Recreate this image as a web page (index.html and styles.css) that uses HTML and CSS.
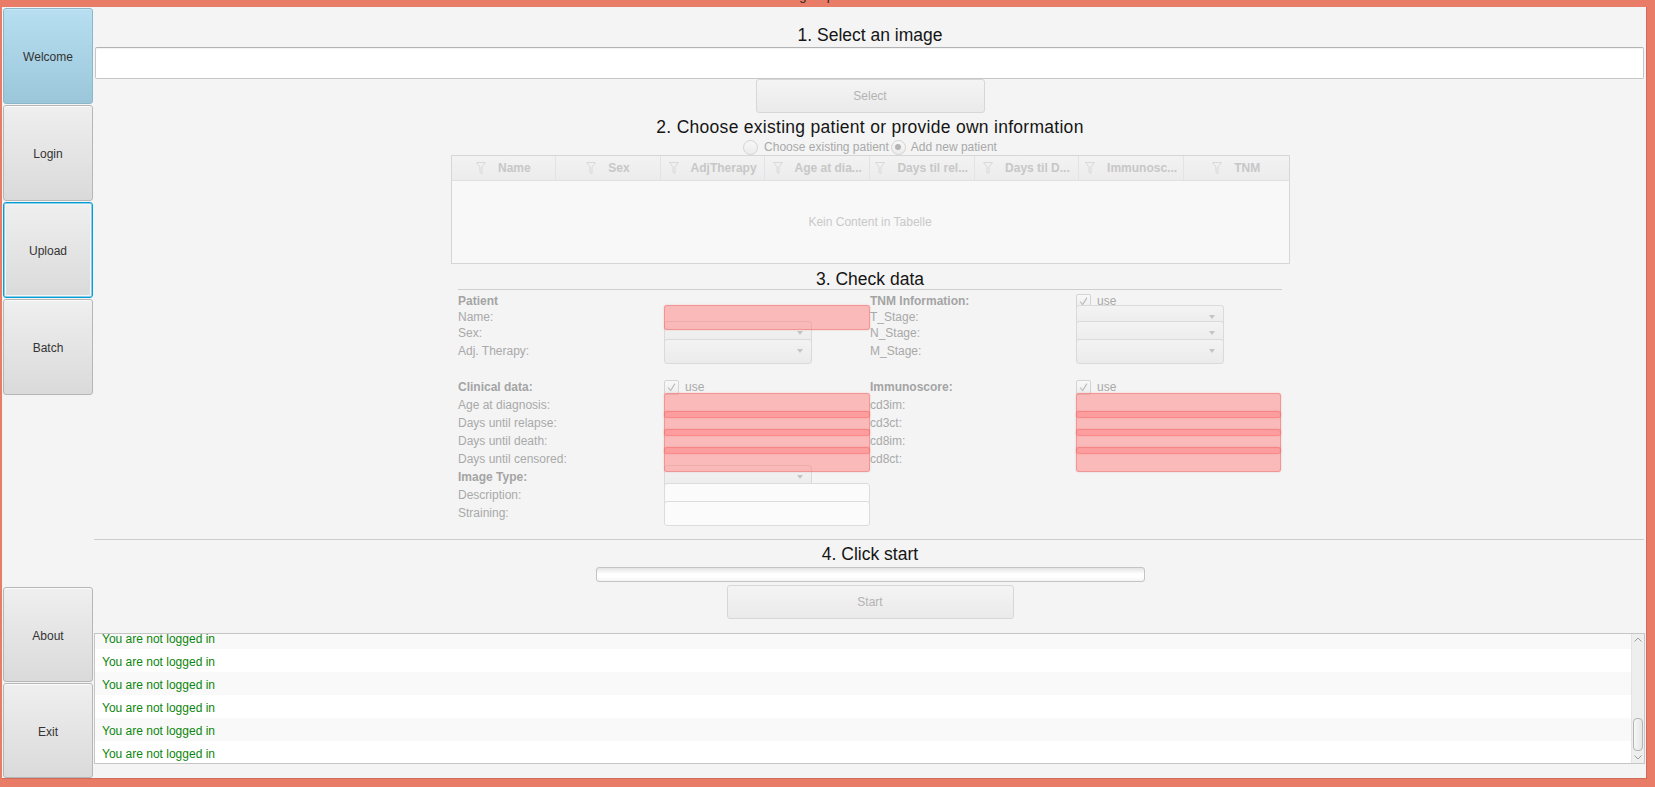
FILE: index.html
```html
<!DOCTYPE html>
<html>
<head>
<meta charset="utf-8">
<title>Image Upload</title>
<link rel="stylesheet" href="styles.css">
</head>
<body>
<div class="titlebar"><span class="title-text">Image Upload</span></div>
<div class="window">
  <nav class="sidebar">
    <button class="nav-btn active">Welcome</button>
    <button class="nav-btn">Login</button>
    <button class="nav-btn focused">Upload</button>
    <button class="nav-btn">Batch</button>
    <div class="sidebar-spacer"></div>
    <button class="nav-btn bottom">About</button>
    <button class="nav-btn bottom">Exit</button>
  </nav>
  <main class="main">
    <div class="heading h1">1. Select an image</div>
    <div class="path-field"></div>
    <button class="btn select-btn" disabled>Select</button>

    <div class="heading h2">2. Choose existing patient or provide own information</div>
    <div class="radios">
      <span class="radio"></span><span class="radio-label">Choose existing patient</span>
      <span class="radio checked"><span class="dot"></span></span><span class="radio-label second">Add new patient</span>
    </div>
    <div class="table">
      <div class="thead">
        <div class="th"><svg class="funnel" viewBox="0 0 10 12"><path d="M0.5 0.5H9.5L6 5V11.5L4 10.5V5Z"/></svg><span>Name</span></div>
        <div class="th"><svg class="funnel" viewBox="0 0 10 12"><path d="M0.5 0.5H9.5L6 5V11.5L4 10.5V5Z"/></svg><span>Sex</span></div>
        <div class="th"><svg class="funnel" viewBox="0 0 10 12"><path d="M0.5 0.5H9.5L6 5V11.5L4 10.5V5Z"/></svg><span>AdjTherapy</span></div>
        <div class="th"><svg class="funnel" viewBox="0 0 10 12"><path d="M0.5 0.5H9.5L6 5V11.5L4 10.5V5Z"/></svg><span>Age at dia...</span></div>
        <div class="th"><svg class="funnel" viewBox="0 0 10 12"><path d="M0.5 0.5H9.5L6 5V11.5L4 10.5V5Z"/></svg><span>Days til rel...</span></div>
        <div class="th"><svg class="funnel" viewBox="0 0 10 12"><path d="M0.5 0.5H9.5L6 5V11.5L4 10.5V5Z"/></svg><span>Days til D...</span></div>
        <div class="th"><svg class="funnel" viewBox="0 0 10 12"><path d="M0.5 0.5H9.5L6 5V11.5L4 10.5V5Z"/></svg><span>Immunosc...</span></div>
        <div class="th"><svg class="funnel" viewBox="0 0 10 12"><path d="M0.5 0.5H9.5L6 5V11.5L4 10.5V5Z"/></svg><span>TNM</span></div>
      </div>
      <div class="tbody"><span class="placeholder">Kein Content in Tabelle</span></div>
    </div>

    <div class="heading h3">3. Check data</div>
    <div class="form-sep"></div>
    <div class="form">
      <div class="lbl bold">Patient</div>
      <div></div>
      <div class="lbl bold">TNM Information:</div>
      <div class="use"><span class="check"><svg viewBox="0 0 15 15"><path d="M3.5 7.5L6.5 11L11.5 3"/></svg></span><span>use</span></div>

      <div class="lbl">Name:</div>
      <div class="err"></div>
      <div class="lbl">T_Stage:</div>
      <div class="combo"><span class="arrow"></span></div>

      <div class="lbl">Sex:</div>
      <div class="combo"><span class="arrow"></span></div>
      <div class="lbl">N_Stage:</div>
      <div class="combo"><span class="arrow"></span></div>

      <div class="lbl">Adj. Therapy:</div>
      <div class="combo"><span class="arrow"></span></div>
      <div class="lbl">M_Stage:</div>
      <div class="combo"><span class="arrow"></span></div>

      <div class="row-gap"></div>

      <div class="lbl bold">Clinical data:</div>
      <div class="use"><span class="check"><svg viewBox="0 0 15 15"><path d="M3.5 7.5L6.5 11L11.5 3"/></svg></span><span>use</span></div>
      <div class="lbl bold">Immunoscore:</div>
      <div class="use"><span class="check"><svg viewBox="0 0 15 15"><path d="M3.5 7.5L6.5 11L11.5 3"/></svg></span><span>use</span></div>

      <div class="lbl">Age at diagnosis:</div>
      <div class="err"></div>
      <div class="lbl">cd3im:</div>
      <div class="err narrow"></div>

      <div class="lbl">Days until relapse:</div>
      <div class="err"></div>
      <div class="lbl">cd3ct:</div>
      <div class="err narrow"></div>

      <div class="lbl">Days until death:</div>
      <div class="err"></div>
      <div class="lbl">cd8im:</div>
      <div class="err narrow"></div>

      <div class="lbl">Days until censored:</div>
      <div class="err"></div>
      <div class="lbl">cd8ct:</div>
      <div class="err narrow"></div>

      <div class="lbl bold">Image Type:</div>
      <div class="combo"><span class="arrow"></span></div>
      <div></div>
      <div></div>

      <div class="lbl">Description:</div>
      <div class="field"></div>
      <div></div>
      <div></div>

      <div class="lbl">Straining:</div>
      <div class="field"></div>
      <div></div>
      <div></div>
    </div>

    <div class="main-sep"></div>
    <div class="heading h4">4. Click start</div>
    <div class="progress"></div>
    <button class="btn start-btn" disabled>Start</button>

    <div class="log">
      <div class="log-rows">
        <div class="log-row">You are not logged in</div>
        <div class="log-row">You are not logged in</div>
        <div class="log-row">You are not logged in</div>
        <div class="log-row">You are not logged in</div>
        <div class="log-row">You are not logged in</div>
        <div class="log-row">You are not logged in</div>
      </div>
      <div class="scrollbar">
        <div class="sb-arrow"><svg viewBox="0 0 8 5"><path d="M0.5 4.5L4 1L7.5 4.5"/></svg></div>
        <div class="sb-track"><div class="sb-thumb"></div></div>
        <div class="sb-arrow"><svg viewBox="0 0 8 5"><path d="M0.5 0.5L4 4L7.5 0.5"/></svg></div>
      </div>
    </div>
  </main>
</div>
</body>
</html>
```
FILE: styles.css
```css
* { box-sizing: border-box; }

html, body {
  margin: 0;
  padding: 0;
}

body {
  width: 1655px;
  height: 787px;
  overflow: hidden;
  background: #e87c67;
  font-family: "Liberation Sans", Arial, sans-serif;
  font-size: 12px;
  color: #333;
}

.titlebar {
  height: 7px;
  overflow: hidden;
  text-align: center;
  padding-right: 19px;
}

.title-text {
  display: block;
  font-size: 13px;
  line-height: 13px;
  margin-top: -11px;
  color: #222;
}

.window {
  margin-left: 2px;
  width: 1645px;
  height: 771px;
  background: #f4f4f4;
  border-right: 1px solid #cf6c59;
  box-shadow: 0 1px 0 #cf6c59;
  display: flex;
}

/* ---------- sidebar ---------- */
.sidebar {
  width: 92px;
  flex: none;
  display: flex;
  flex-direction: column;
}

.sidebar-spacer { flex: 1; }

.nav-btn {
  width: 90px;
  height: 96px;
  flex: none;
  margin: 1px 0 0 1px;
  padding: 2px 0 0 0;
  border: 1px solid #b6b6b6;
  border-radius: 3px;
  background: linear-gradient(#efefef, #dadada);
  box-shadow: inset 0 1px 0 #fbfbfb;
  font-family: "Liberation Sans", Arial, sans-serif;
  font-size: 12px;
  color: #333;
}

.nav-btn.bottom { height: 95px; }

.nav-btn.active {
  background: linear-gradient(#b7dff1, #9bc6da);
  border-color: #8cb6ca;
  box-shadow: inset 0 1px 0 #c7e8f6;
}

.nav-btn.focused {
  border-color: #049ed4;
  box-shadow: inset 0 0 0 1px rgba(4, 158, 212, 0.45), inset 0 0 0 2px #f6f6f6;
}

/* ---------- main ---------- */
.main {
  flex: 1;
  display: flex;
  flex-direction: column;
  align-items: center;
}

.heading {
  font-size: 17.5px;
  line-height: 20px;
  height: 20px;
  color: #151515;
  white-space: nowrap;
}

.h1 { margin-top: 18px; }
.h2 { margin-top: 4px; letter-spacing: 0.28px; }
.h3 { margin-top: 5px; }
.h4 { margin-top: 4px; }

.path-field {
  align-self: stretch;
  margin: 2px 2px 0 1px;
  height: 32px;
  background: #fff;
  border: 1px solid #c6c6c6;
  border-top-color: #b3b3b3;
  border-radius: 2px;
  box-shadow: inset 0 1px 1px rgba(0, 0, 0, 0.05);
}

.btn {
  padding: 0;
  border: 1px solid #d7d7d7;
  border-radius: 3px;
  background: linear-gradient(#f4f4f4, #eaeaea);
  font-family: "Liberation Sans", Arial, sans-serif;
  font-size: 12px;
  color: #b3b3b3;
}

.select-btn {
  width: 229px;
  height: 34px;
}

.start-btn {
  width: 287px;
  height: 34px;
  margin-top: 3px;
}

/* radios */
.radios {
  margin-top: 2px;
  height: 16px;
  display: flex;
  align-items: center;
  color: #a9a9a9;
}

.radio {
  width: 15px;
  height: 15px;
  border-radius: 50%;
  border: 1px solid #d3d3d3;
  background: linear-gradient(#f7f7f7, #ececec);
  display: flex;
  align-items: center;
  justify-content: center;
}

.radio .dot {
  width: 6px;
  height: 6px;
  border-radius: 50%;
  background: #b4b4b4;
}

.radio-label { margin-left: 6px; margin-right: 2px; }
.radio-label.second { margin-left: 5px; margin-right: 0; }

/* table */
.table {
  width: 839px;
  height: 109px;
  border: 1px solid #d6d6d6;
  background: #f8f8f8;
  display: flex;
  flex-direction: column;
}

.thead {
  height: 25px;
  flex: none;
  display: grid;
  grid-template-columns: repeat(8, 1fr);
  background: linear-gradient(#f2f2f2, #ececec);
  border-bottom: 1px solid #e1e1e1;
}

.th {
  display: flex;
  align-items: center;
  justify-content: center;
  gap: 12px;
  border-right: 1px solid #e3e3e3;
  font-weight: bold;
  color: #c7c7c7;
  white-space: nowrap;
  overflow: hidden;
}

.th:last-child { border-right: none; }

.funnel {
  width: 10px;
  height: 12px;
  flex: none;
}

.funnel path {
  fill: none;
  stroke: #d9d9d9;
  stroke-width: 1;
}

.tbody {
  flex: 1;
  display: flex;
  align-items: center;
  justify-content: center;
}

.placeholder { color: #c9c9c9; }

/* form */
.form-sep {
  width: 824px;
  height: 1px;
  background: #cfcfcf;
}

.form {
  margin-top: 3px;
  width: 824px;
  display: grid;
  grid-template-columns: repeat(4, 206px);
  grid-template-rows: 16px 16px 16px 20px 17px repeat(8, 18px);
}

.form > * { align-self: center; }

.row-gap { grid-column: 1 / -1; }

.lbl {
  line-height: 14px;
  color: #a9a9a9;
  white-space: nowrap;
}

.lbl.bold {
  font-weight: bold;
  color: #a4a4a4;
}

.use {
  display: flex;
  align-items: center;
  gap: 6px;
  color: #a9a9a9;
  line-height: 15px;
}

.check {
  width: 15px;
  height: 15px;
  flex: none;
  border: 1px solid #d4d4d4;
  border-radius: 2px;
  background: linear-gradient(#f8f8f8, #ededed);
  display: flex;
}

.check svg { width: 13px; height: 13px; }

.check path {
  fill: none;
  stroke: #b9b9b9;
  stroke-width: 1.2;
}

.combo {
  width: 148px;
  height: 25px;
  border: 1px solid #dadada;
  border-radius: 3px;
  background: linear-gradient(#f3f3f3, #ebebeb);
  display: flex;
  align-items: center;
  justify-content: flex-end;
  padding-right: 8px;
}

.arrow {
  width: 0;
  height: 0;
  border-left: 3.5px solid transparent;
  border-right: 3.5px solid transparent;
  border-top: 4px solid #c4c4c4;
}

.err {
  position: relative;
  z-index: 1;
  width: 206px;
  height: 25px;
  border: 1px solid rgba(232, 105, 105, 0.45);
  border-radius: 3px;
  background: rgba(255, 128, 128, 0.5);
  box-shadow: 0 0 1.5px rgba(230, 90, 90, 0.45);
}

.err.narrow { width: 205px; }

.field {
  width: 206px;
  height: 25px;
  border: 1px solid #dcdcdc;
  border-radius: 3px;
  background: #fbfbfb;
}

.main-sep {
  align-self: stretch;
  margin: 17px 2px 0 0;
  height: 1px;
  background: #cccccc;
}

.progress {
  margin-top: 3px;
  width: 549px;
  height: 15px;
  border: 1px solid #c3c3c3;
  border-radius: 3px;
  background: linear-gradient(#e4e4e4, #ffffff 45%, #ffffff 70%, #f3f3f3);
}

/* log */
.log {
  align-self: stretch;
  margin: 14px 1px 0 0;
  height: 131px;
  border: 1px solid #c6c6c6;
  background: #fff;
  display: flex;
  overflow: hidden;
}

.log-rows {
  flex: 1;
  overflow: hidden;
}

.log-row {
  height: 23px;
  padding: 3px 0 0 7px;
  line-height: 20px;
  color: #0c860c;
  background: #fff;
}

.log-row:nth-child(odd) { background: #f9f9f9; }
.log-row:first-child { margin-top: -8px; }

.scrollbar {
  width: 13px;
  flex: none;
  background: #eeeeee;
  border-left: 1px solid #e4e4e4;
  display: flex;
  flex-direction: column;
}

.sb-arrow {
  height: 11px;
  display: flex;
  align-items: center;
  justify-content: center;
}

.sb-arrow svg { width: 8px; height: 5px; }

.sb-arrow path {
  fill: none;
  stroke: #9c9c9c;
  stroke-width: 1;
}

.sb-track {
  flex: 1;
  display: flex;
  flex-direction: column;
  justify-content: flex-end;
  padding: 0 1px 1px 1px;
}

.sb-thumb {
  height: 33px;
  border: 1px solid #b4b4b4;
  border-radius: 4px;
  background: linear-gradient(90deg, #f6f6f6, #e6e6e6);
}
```
